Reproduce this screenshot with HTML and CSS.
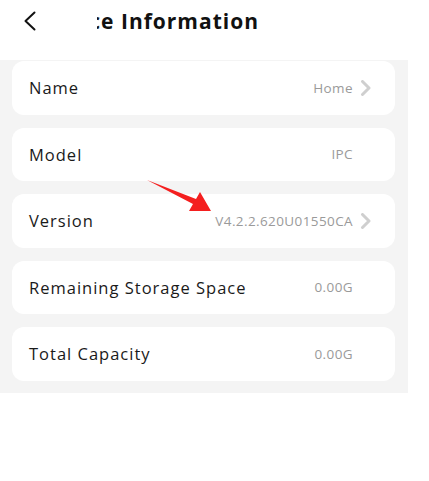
FILE: index.html
```html
<!DOCTYPE html>
<html>
<head>
<meta charset="utf-8">
<link rel="stylesheet" href="styles.css">
</head>
<body>
<div class="page">
  <header class="header">
    <svg class="back" width="14" height="20" viewBox="0 0 14 20"><path d="M11.5 1.5 L2.5 10 L11.5 18.5" fill="none" stroke="#111" stroke-width="2" stroke-linecap="round" stroke-linejoin="round"/></svg>
    <div class="title-clip"><span class="title">Device Information</span></div>
  </header>
  <main class="list">
    <div class="card"><span class="label">Name</span><span class="value">Home</span><svg class="chev" width="12" height="16" viewBox="0 0 12 16"><path d="M2.5 1.5 L9 8 L2.5 14.5" fill="none" stroke="#cfcfcf" stroke-width="3" stroke-linecap="round" stroke-linejoin="round"/></svg></div>
    <div class="card"><span class="label">Model</span><span class="value">IPC</span><span class="chev"></span></div>
    <div class="card"><span class="label">Version</span><span class="value">V4.2.2.620U01550CA</span><svg class="chev" width="12" height="16" viewBox="0 0 12 16"><path d="M2.5 1.5 L9 8 L2.5 14.5" fill="none" stroke="#cfcfcf" stroke-width="3" stroke-linecap="round" stroke-linejoin="round"/></svg></div>
    <div class="card"><span class="label">Remaining Storage Space</span><span class="value">0.00G</span><span class="chev"></span></div>
    <div class="card"><span class="label">Total Capacity</span><span class="value">0.00G</span><span class="chev"></span></div>
  </main>
  <svg class="pointer" width="429" height="481" viewBox="0 0 429 481"><polygon points="147,180 196,199 200,192 211,211 189,211 193,204" fill="#f41f1f"/></svg>
</div>
</body>
</html>
```
FILE: styles.css
```css
html, body {
  margin: 0;
  padding: 0;
  background: #ffffff;
}
body {
  font-family: "Open Sans", "Liberation Sans", sans-serif;
  width: 429px;
  height: 481px;
  overflow: hidden;
}
.page {
  position: relative;
  width: 408px;
}
.header {
  height: 60px;
  display: flex;
  align-items: flex-start;
  background: #fff;
}
.back {
  margin: 11px 0 0 23px;
  flex-shrink: 0;
}
.title-clip {
  margin: 4px 0 0 60px;
  width: 162px;
  height: 34px;
  overflow: hidden;
  display: flex;
  justify-content: flex-end;
}
.title {
  flex-shrink: 0;
  white-space: nowrap;
  font-size: 21px;
  font-weight: 700;
  letter-spacing: 1px;
  color: #111;
  line-height: 34px;
}
.list {
  background: #f4f4f4;
  padding: 1px 13px 12px 12px;
  display: flex;
  flex-direction: column;
  gap: 13px;
}
.card {
  background: #fff;
  border-radius: 12px;
  height: 53.5px;
  display: flex;
  align-items: center;
  padding: 0 23px 0 17px;
}
.label {
  font-size: 16.5px;
  letter-spacing: 1px;
  color: #1a1a1a;
  flex: 1;
  white-space: nowrap;
}
.value {
  font-size: 13.5px;
  letter-spacing: 0.4px;
  color: #9a9a9a;
  white-space: nowrap;
}
.chev {
  width: 12px;
  height: 16px;
  margin-left: 7px;
  flex-shrink: 0;
}
.pointer {
  position: absolute;
  left: 0;
  top: 0;
  pointer-events: none;
}
```
